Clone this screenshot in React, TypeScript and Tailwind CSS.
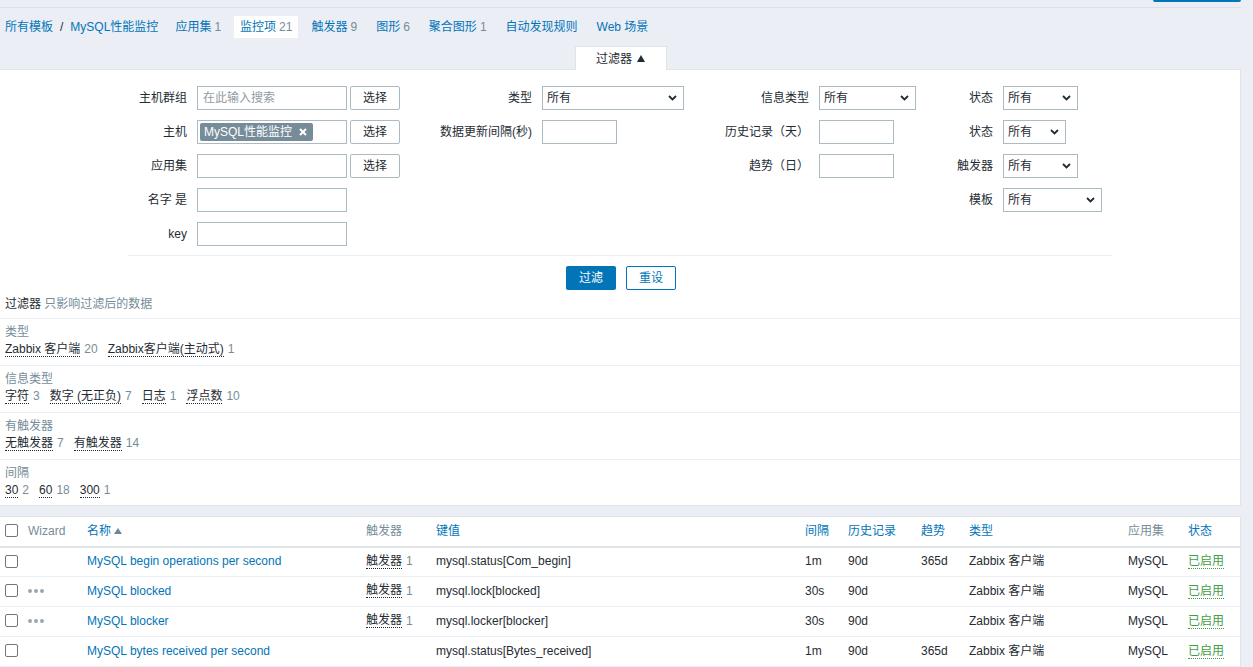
import React from 'react';

const Chevron = () => (
  <svg width="9" height="6" viewBox="0 0 9 6" className="shrink-0">
    <path d="M1 1 L4.5 4.5 L8 1" fill="none" stroke="#1f2c33" strokeWidth="1.8" />
  </svg>
);

const Select = ({ w }: { w: string }) => (
  <div className={`flex items-center justify-between h-[24px] border border-[#acbbc2] bg-white pl-[4px] pr-[6px] ${w}`}>
    <span>所有</span>
    <Chevron />
  </div>
);

const Input = ({ w, placeholder }: { w: string; placeholder?: string }) => (
  <div className={`flex items-center h-[24px] border border-[#acbbc2] bg-white px-[5px] text-[#8f9ba3] ${w}`}>
    {placeholder}
  </div>
);

const PickButton = () => (
  <div className="flex items-center justify-center h-[24px] w-[50px] ml-[3px] border border-[#acbbc2] bg-white rounded-[2px]">
    选择
  </div>
);

const Checkbox = () => <div className="w-[13px] h-[13px] border border-[#767676] rounded-[2px] bg-white" />;

const Dotted = ({ children, green }: { children: React.ReactNode; green?: boolean }) => (
  <span
    className={
      green
        ? 'text-[#429e47] border-b border-dotted border-[#429e47] leading-[14px]'
        : 'text-[#1f2c33] border-b border-dotted border-[#1f2c33] leading-[14px]'
    }
  >
    {children}
  </span>
);

const navItems = [
  { label: '应用集', count: '1' },
  { label: '监控项', count: '21', active: true },
  { label: '触发器', count: '9' },
  { label: '图形', count: '6' },
  { label: '聚合图形', count: '1' },
  { label: '自动发现规则' },
  { label: 'Web 场景' },
];

const subfilters = [
  { title: '类型', items: [['Zabbix 客户端', '20'], ['Zabbix客户端(主动式)', '1']] },
  { title: '信息类型', items: [['字符', '3'], ['数字 (无正负)', '7'], ['日志', '1'], ['浮点数', '10']] },
  { title: '有触发器', items: [['无触发器', '7'], ['有触发器', '14']] },
  { title: '间隔', items: [['30', '2'], ['60', '18'], ['300', '1']] },
];

const rows = [
  { name: 'MySQL begin operations per second', wizard: false, trig: true, key: 'mysql.status[Com_begin]', interval: '1m', history: '90d', trends: '365d' },
  { name: 'MySQL blocked', wizard: true, trig: true, key: 'mysql.lock[blocked]', interval: '30s', history: '90d', trends: '' },
  { name: 'MySQL blocker', wizard: true, trig: true, key: 'mysql.locker[blocker]', interval: '30s', history: '90d', trends: '' },
  { name: 'MySQL bytes received per second', wizard: false, trig: false, key: 'mysql.status[Bytes_received]', interval: '1m', history: '90d', trends: '365d' },
];

const grid = 'grid grid-cols-[23px_59px_279px_70px_369px_43px_73px_48px_159px_60px_58px] items-center';

export default function App() {
  return (
    <div className="min-h-screen bg-[#ebeef5] text-[12px] text-[#1f2c33] font-['Liberation_Sans','Noto_Sans_CJK_SC',sans-serif]">
      <div className="w-[1241px]">
        {/* header remnant */}
        <div className="flex justify-end h-[8px] border-b border-[#dde1e6]">
          <div className="w-[88px] h-[2px] bg-[#0275b8] rounded-b-[2px]" />
        </div>

        {/* navigation */}
        <nav className="flex items-center h-[38px] gap-[7px]">
          <div className="flex items-center pl-[5px] pr-[4px]">
            <span className="text-[#0275b8]">所有模板</span>
            <span className="ml-[7px] mr-[7px]">/</span>
            <span className="text-[#0275b8]">MySQL性能监控</span>
          </div>
          {navItems.map((n) => (
            <div
              key={n.label}
              className={n.active ? 'flex items-center h-[22px] px-[6px] bg-white' : 'flex items-center h-[22px] px-[6px]'}
            >
              <span className="text-[#0275b8]">{n.label}</span>
              {n.count && <span className="ml-[3px] text-[#768d99]">{n.count}</span>}
            </div>
          ))}
        </nav>

        {/* filter tab */}
        <div className="flex justify-center">
          <div className="relative z-10 -mb-px flex items-center justify-center gap-[5px] w-[92px] h-[24px] bg-white border border-b-0 border-[#dfe4e7]">
            <span>过滤器</span>
            <svg width="8" height="7" viewBox="0 0 8 7"><path d="M0 7 L4 0 L8 7 Z" fill="#1f2c33" /></svg>
          </div>
        </div>

        {/* filter panel */}
        <div className="bg-white border-t border-r border-b border-[#dfe4e7]">
          <div className="mx-auto w-[984px] flex pt-[16px] pb-[9px] border-b border-[#ebeef5]">
            <div className="w-[302px] grid grid-cols-[59px_1fr] gap-x-[10px] gap-y-[10px] items-center">
              <div className="text-right">主机群组</div>
              <div className="flex">
                <Input w="w-[150px]" placeholder="在此输入搜索" />
                <PickButton />
              </div>
              <div className="text-right">主机</div>
              <div className="flex">
                <div className="flex items-center h-[24px] w-[150px] border border-[#acbbc2] bg-white pl-[2px]">
                  <div className="flex items-center h-[18px] pl-[4px] pr-[6px] bg-[#768d99] text-white rounded-[2px]">
                    <span>MySQL性能监控</span>
                    <svg width="8" height="8" viewBox="0 0 8 8" className="ml-[7px]">
                      <path d="M1 1 L7 7 M7 1 L1 7" stroke="#ffffff" strokeWidth="2" />
                    </svg>
                  </div>
                </div>
                <PickButton />
              </div>
              <div className="text-right">应用集</div>
              <div className="flex">
                <Input w="w-[150px]" />
                <PickButton />
              </div>
              <div className="text-right">名字 是</div>
              <Input w="w-[150px]" />
              <div className="text-right">key</div>
              <Input w="w-[150px]" />
            </div>

            <div className="w-[270px] grid grid-cols-[102px_1fr] gap-x-[10px] gap-y-[10px] items-center content-start">
              <div className="text-right">类型</div>
              <Select w="w-[142px]" />
              <div className="text-right">数据更新间隔(秒)</div>
              <Input w="w-[75px]" />
            </div>

            <div className="w-[230px] grid grid-cols-[109px_1fr] gap-x-[10px] gap-y-[10px] items-center content-start">
              <div className="text-right">信息类型</div>
              <Select w="w-[97px]" />
              <div className="text-right">历史记录（天）</div>
              <Input w="w-[75px]" />
              <div className="text-right">趋势（日）</div>
              <Input w="w-[75px]" />
            </div>

            <div className="w-[182px] grid grid-cols-[63px_1fr] gap-x-[10px] gap-y-[10px] items-center content-start">
              <div className="text-right">状态</div>
              <Select w="w-[75px]" />
              <div className="text-right">状态</div>
              <Select w="w-[63px]" />
              <div className="text-right">触发器</div>
              <Select w="w-[75px]" />
              <div className="text-right">模板</div>
              <Select w="w-[99px]" />
            </div>
          </div>

          <div className="flex justify-center gap-[10px] pt-[10px] pl-[2px]">
            <div className="flex items-center justify-center w-[50px] h-[24px] bg-[#0275b8] text-white rounded-[2px]">过滤</div>
            <div className="flex items-center justify-center w-[50px] h-[24px] bg-white border border-[#0275b8] text-[#0275b8] rounded-[2px]">重设</div>
          </div>

          <div className="mt-[6px] pb-[6px] pl-[5px] leading-[16px] border-b border-[#ebeef5]">
            过滤器 <span className="text-[#768d99]">只影响过滤后的数据</span>
          </div>

          {subfilters.map((g, i) => (
            <div
              key={g.title}
              className={i < subfilters.length - 1 ? 'pt-[5px] pb-[7px] pl-[5px] border-b border-[#ebeef5]' : 'pt-[5px] pb-[6px] pl-[5px]'}
            >
              <div className="leading-[16px] text-[#768d99]">{g.title}</div>
              <div className="flex items-center h-[18px] gap-[10px]">
                {g.items.map(([label, count]) => (
                  <span key={label} className="flex items-center">
                    <Dotted>{label}</Dotted>
                    <span className="ml-[4px] text-[#768d99]">{count}</span>
                  </span>
                ))}
              </div>
            </div>
          ))}
        </div>

        {/* items table */}
        <div className="mt-[10px] bg-white border-t border-r border-[#dfe4e7]">
          <div className={`${grid} h-[31px] pb-[2px] border-b-2 border-[#dfe4e7]`}>
            <div className="pl-[5px]"><Checkbox /></div>
            <div className="pl-[5px] text-[#768d99]">Wizard</div>
            <div className="pl-[5px] flex items-center gap-[3px] text-[#0275b8]">
              名称
              <svg width="8" height="6" viewBox="0 0 8 6"><path d="M0 6 L4 0 L8 6 Z" fill="#6b8798" /></svg>
            </div>
            <div className="pl-[5px] text-[#768d99]">触发器</div>
            <div className="pl-[5px] text-[#0275b8]">键值</div>
            <div className="pl-[5px] text-[#0275b8]">间隔</div>
            <div className="pl-[5px] text-[#0275b8]">历史记录</div>
            <div className="pl-[5px] text-[#0275b8]">趋势</div>
            <div className="pl-[5px] text-[#0275b8]">类型</div>
            <div className="pl-[5px] text-[#768d99]">应用集</div>
            <div className="pl-[5px] text-[#0275b8]">状态</div>
          </div>
          {rows.map((r, i) => (
            <div key={r.name} className={i === 0 ? `${grid} h-[29px] pb-[2px] border-b border-[#ebeef5]` : `${grid} h-[30px] pb-[2px] border-b border-[#ebeef5]`}>
              <div className="pl-[5px]"><Checkbox /></div>
              <div className="pl-[5px] flex gap-[2px]">
                {r.wizard && (
                  <>
                    <span className="w-[4px] h-[4px] rounded-full bg-[#9aa7af]" />
                    <span className="w-[4px] h-[4px] rounded-full bg-[#9aa7af]" />
                    <span className="w-[4px] h-[4px] rounded-full bg-[#9aa7af]" />
                  </>
                )}
              </div>
              <div className="pl-[5px] text-[#0275b8]">{r.name}</div>
              <div className="pl-[5px]">
                {r.trig && (
                  <span className="flex items-center">
                    <Dotted>触发器</Dotted>
                    <span className="ml-[4px] text-[#768d99]">1</span>
                  </span>
                )}
              </div>
              <div className="pl-[5px]">{r.key}</div>
              <div className="pl-[5px]">{r.interval}</div>
              <div className="pl-[5px]">{r.history}</div>
              <div className="pl-[5px]">{r.trends}</div>
              <div className="pl-[5px]">Zabbix 客户端</div>
              <div className="pl-[5px]">MySQL</div>
              <div className="pl-[5px]"><Dotted green>已启用</Dotted></div>
            </div>
          ))}
        </div>
      </div>
    </div>
  );
}
